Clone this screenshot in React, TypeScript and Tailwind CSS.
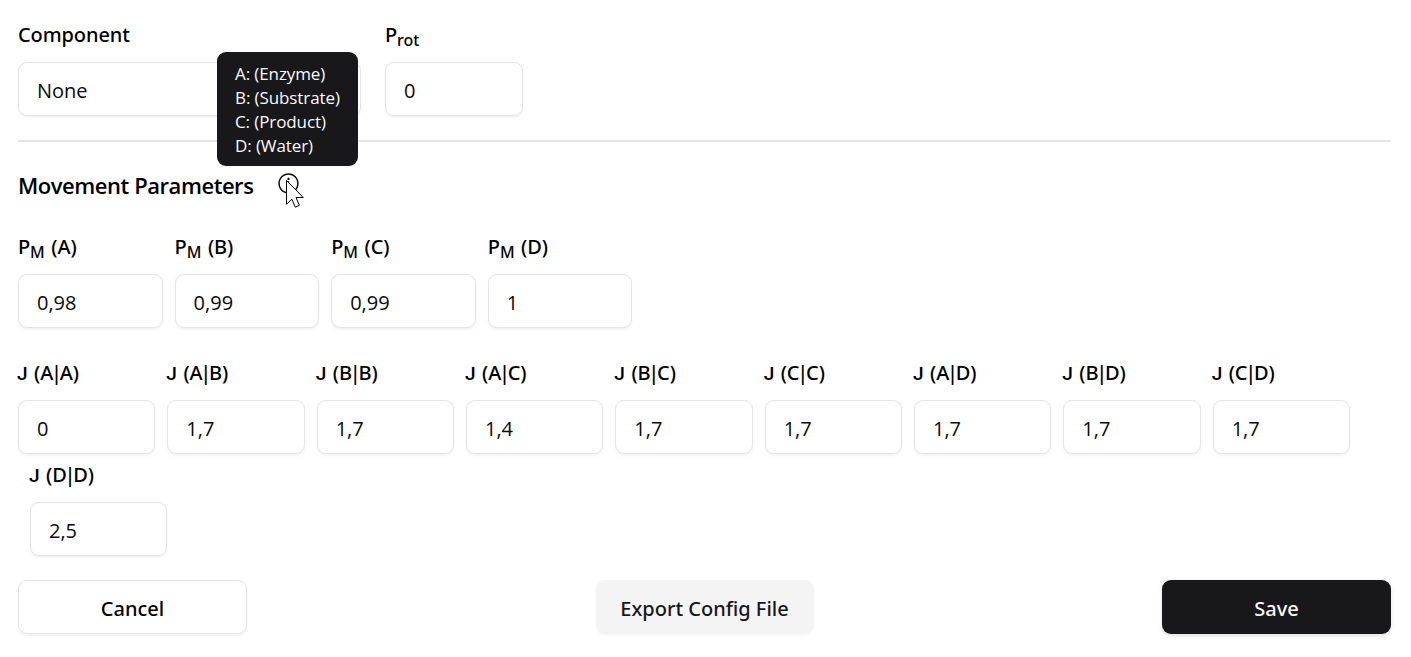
import type { ReactNode } from "react";

function Field({ label, value, className }: { label: ReactNode; value: string; className: string }) {
  return (
    <div className={`shrink-0 ${className}`}>
      <div className="flex h-[30px] items-center font-['Noto_Sans','Open_Sans',sans-serif] text-[20px] font-medium tracking-[-0.005em] [word-spacing:1.5px] whitespace-pre text-black">
        <span>{label}</span>
      </div>
      <div className="mt-3 flex h-[54px] items-center rounded-[9px] border border-[#e4e4e7] bg-white pt-1 pl-[18px] text-[20px] shadow-[0_1.5px_3px_rgba(0,0,0,0.05)]">
        {value}
      </div>
    </div>
  );
}

const movement = [
  ["A", "0,98"],
  ["B", "0,99"],
  ["C", "0,99"],
  ["D", "1"],
];

const joining = [
  ["A", "A", "0"],
  ["A", "B", "1,7"],
  ["B", "B", "1,7"],
  ["A", "C", "1,4"],
  ["B", "C", "1,7"],
  ["C", "C", "1,7"],
  ["A", "D", "1,7"],
  ["B", "D", "1,7"],
  ["C", "D", "1,7"],
  ["D", "D", "2,5"],
];

function Sub({ children }: { children: ReactNode }) {
  return <sub className="text-[16px]">{children}</sub>;
}

function PairLabel({ first, second }: { first: string; second: string }) {
  return (
    <>
      <span className="-ml-px font-['Roboto',sans-serif] text-[19px]">J</span> ({first}
      <span className="mx-[-2.2px]">|</span>
      {second})
    </>
  );
}

export default function App() {
  return (
    <div className="h-[657px] w-[1411px] overflow-hidden bg-white pt-5 pr-5 pl-[18px] font-['Open_Sans','Noto_Sans',sans-serif] text-[#09090b]">
      <div className="flex gap-6">
        <Field label="Component" value="None" className="w-[343px]" />
        <Field label={<>P<Sub>rot</Sub></>} value="0" className="w-[138px]" />
      </div>

      <div className="mt-6 h-0.5 bg-[#e4e4e7]" />

      <div className="mt-7 flex h-[30px] items-center">
        <h3 className="w-[259px] text-[22px] font-semibold tracking-[-0.45px] whitespace-nowrap text-black">
          Movement Parameters
        </h3>
        <div className="relative -mt-1 size-[23px]">
          <svg viewBox="0 0 15 15" className="size-[23px]" fill="currentColor">
            <path
              fillRule="evenodd"
              clipRule="evenodd"
              d="M7.49991 0.876892C3.84222 0.876892 0.877075 3.84204 0.877075 7.49972C0.877075 11.1574 3.84222 14.1226 7.49991 14.1226C11.1576 14.1226 14.1227 11.1574 14.1227 7.49972C14.1227 3.84204 11.1576 0.876892 7.49991 0.876892ZM1.82707 7.49972C1.82707 4.36671 4.36689 1.82689 7.49991 1.82689C10.6329 1.82689 13.1727 4.36671 13.1727 7.49972C13.1727 10.6327 10.6329 13.1726 7.49991 13.1726C4.36689 13.1726 1.82707 10.6327 1.82707 7.49972ZM8.24992 4.49999C8.24992 4.9142 7.91413 5.24999 7.49992 5.24999C7.08571 5.24999 6.74992 4.9142 6.74992 4.49999C6.74992 4.08577 7.08571 3.74999 7.49992 3.74999C7.91413 3.74999 8.24992 4.08577 8.24992 4.49999ZM6.00003 5.99999H6.50003H7.50003C7.77618 5.99999 8.00003 6.22384 8.00003 6.49999V9.99999H8.50003H9.00003V11H8.50003H7.50003H6.50003H6.00003V9.99999H6.50003H7.00003V6.99999H6.50003H6.00003V5.99999Z"
            />
          </svg>
          <svg viewBox="0 0 19 29" className="absolute top-[8px] left-[9px] h-[29px] w-[19px]">
            <path
              d="M.5 .5V24.2L5.8 19.2L9.3 27.2L13.4 25.3L10 17.5H17.3Z"
              fill="#fff"
              stroke="#000"
              strokeWidth="1"
            />
          </svg>
          <div className="absolute bottom-[29px] left-[-60px] h-[114px] w-[141px] rounded-[9px] bg-[#18181b] pt-[10px] pl-[18px] text-[17px] leading-6 tracking-[-0.1px] whitespace-nowrap text-[#fafafa]">
            <p>A: (Enzyme)</p>
            <p>B: (Substrate)</p>
            <p>C: (Product)</p>
            <p>D: (Water)</p>
          </div>
        </div>
      </div>

      <div className="mt-8 flex gap-3">
        {movement.map(([name, value]) => (
          <Field key={name} label={<>P<Sub>M</Sub> ({name})</>} value={value} className="w-[144.6px]" />
        ))}
      </div>

      <div className="mt-[30px] flex flex-wrap gap-y-1.5">
        {joining.map(([first, second, value]) => (
          <Field
            key={first + second}
            label={<PairLabel first={first} second={second} />}
            value={value}
            className="ml-3 w-[137.33px] first:ml-0"
          />
        ))}
      </div>

      <div className="mt-6 flex justify-between font-['Noto_Sans','Open_Sans',sans-serif] text-[20px] font-medium">
        <button className="h-[54px] w-[229px] rounded-[9px] border border-[#e4e4e7] bg-white pt-1 text-black shadow-[0_1.5px_3px_rgba(0,0,0,0.05)]">
          Cancel
        </button>
        <button className="h-[54px] w-[218px] rounded-[9px] bg-[#f4f4f5] pt-1 whitespace-nowrap text-[#18181b] shadow-[0_1.5px_3px_rgba(0,0,0,0.03)]">
          Export Config File
        </button>
        <button className="h-[54px] w-[229px] rounded-[9px] bg-[#18181b] pt-1 text-[#fafafa] shadow-[0_1.5px_4px_rgba(0,0,0,0.12)]">
          Save
        </button>
      </div>
    </div>
  );
}
